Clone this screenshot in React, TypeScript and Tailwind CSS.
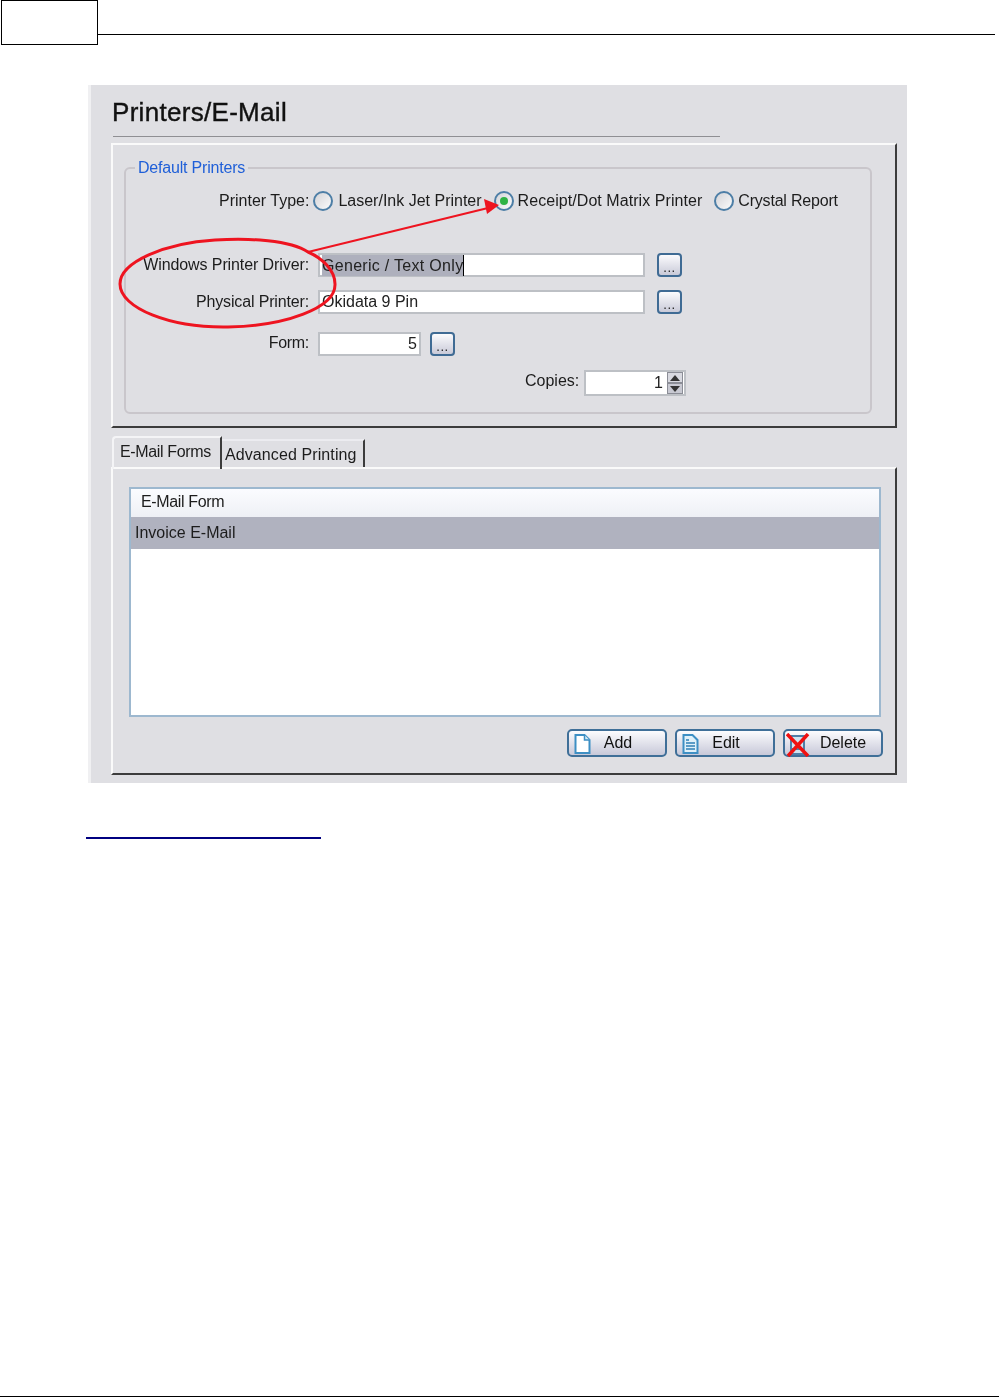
const EllipsisButton = ({ className = '' }: { className?: string }) => (
  <button className={`flex h-[24px] w-[25px] shrink-0 items-end justify-center rounded-[4px] border-2 border-[#3f6b94] bg-gradient-to-b from-[#fbfbfd] to-[#c9cad8] pb-[1px] text-[13px] leading-[12px] tracking-[0.5px] text-[#222] ${className}`}>
    ...
  </button>
)

const Radio = ({ checked = false }: { checked?: boolean }) => (
  <span className="flex h-[20px] w-[20px] shrink-0 items-center justify-center rounded-full border-2 border-[#4d7ea6] bg-gradient-to-br from-[#d4d4d8] to-[#fbfbfb]">
    {checked && <span className="h-[8px] w-[8px] rounded-full bg-[#2fb344]" />}
  </span>
)

const Label = ({ children, className = '' }: { children: string; className?: string }) => (
  <span className={`w-[183px] shrink-0 text-right text-[16px] leading-[20px] text-[#1c1c1c] ${className}`}>{children}</span>
)

const Panel = ({ className = '', children }: { className?: string; children: React.ReactNode }) => (
  <div className={`border-t-2 border-r-2 border-b-2 border-l-2 border-t-[#fafafa] border-r-[#3c3c3c] border-b-[#3c3c3c] border-l-[#fafafa] ${className}`}>
    {children}
  </div>
)

const ToolButton = ({ label, icon, className = '' }: { label: string; icon: React.ReactNode; className?: string }) => (
  <button className={`relative flex h-[28px] w-[100px] items-center justify-center rounded-[5px] border-2 border-[#3f6f98] bg-gradient-to-b from-[#fcfcfe] to-[#c8c9d9] text-[16px] leading-[20px] text-[#111] ${className}`}>
    <span className="absolute top-[3px] left-[4px] h-[20px] w-[20px]">{icon}</span>
    <span className="ml-[2px]">{label}</span>
  </button>
)

const AddIcon = () => (
  <svg viewBox="0 0 20 20" className="h-full w-full">
    <path d="M2.5 1h9l5 5v13h-14z" fill="#fff" stroke="#3d8fc4" strokeWidth="2" />
    <path d="M11.5 1v5h5" fill="#d7ecf7" stroke="#3d8fc4" strokeWidth="1.5" />
  </svg>
)

const EditIcon = () => (
  <svg viewBox="0 0 20 20" className="h-full w-full">
    <path d="M2.5 1h9l5 5v13h-14z" fill="#dff0f9" stroke="#3d8fc4" strokeWidth="2" />
    <path d="M5 6h3M5 9h9M5 12h9M5 15h9" stroke="#2f7fb5" strokeWidth="1.6" />
  </svg>
)

const DeleteIcon = () => (
  <svg viewBox="0 0 24 24" className="h-[24px] w-[24px] -translate-x-[3px] -translate-y-[1px]">
    <path d="M5 3h13v18H5z" fill="#cfe3f0" stroke="#4f7fa8" strokeWidth="2" />
    <path d="M5 16h13" stroke="#4f7fa8" strokeWidth="2" />
    <path d="M1 1l21 22M22 1L2 23" stroke="#f01010" strokeWidth="3.5" />
  </svg>
)

export default function App() {
  return (
    <div className="relative h-[1397px] w-[999px] overflow-hidden bg-white font-['Liberation_Sans',sans-serif]">
      <div className="flex items-start pl-[1px]">
        <div className="h-[45px] w-[97px] border border-black" />
        <div className="mt-[34px] mr-[4px] flex-1 border-t border-black" />
      </div>

      <div className="relative mt-[40px] ml-[88px] h-[698px] w-[819px] border-l-[3px] border-[#f0f0f2] bg-[#dfdfe3] pt-[13px] pl-[20px] blur-[0.35px]">
        <h1 className="pl-[1px] text-[26px] leading-[28px] tracking-[0.3px] text-[#111] [-webkit-text-stroke:0.4px_#111]">Printers/E-Mail</h1>
        <div className="mt-[10px] ml-[2px] h-[1px] w-[607px] bg-[#8f8f93]" />

        <Panel className="mt-[6px] h-[285px] w-[786px] pt-[22px] pl-[11px]">
          <div className="relative h-[247px] w-[748px] rounded-[6px] border-2 border-[#c9c6cb]">
            <span className="absolute -top-[10px] left-[9px] bg-[#dfdfe3] px-[3px] text-[16px] leading-[18px] tracking-[-0.2px] text-[#1f5fd8]">Default Printers</span>

            <div className="mt-[21px] flex h-[22px] items-center text-[16px] leading-[20px] text-[#1c1c1c]">
              <span className="ml-[93px]">Printer Type:</span>
              <span className="ml-[4px] flex items-center gap-[5px]"><Radio />Laser/Ink Jet Printer</span>
              <span className="ml-[12px] flex items-center gap-[4px]"><Radio checked /><span className="tracking-[0.06px]">Receipt/Dot Matrix Printer</span></span>
              <span className="ml-[12px] flex items-center gap-[4px]"><Radio /><span className="tracking-[-0.2px]">Crystal Report</span></span>
            </div>

            <div className="mt-[41px] flex items-center gap-[9px]">
              <Label className="tracking-[-0.1px]">Windows Printer Driver:</Label>
              <div className="flex h-[24px] w-[327px] items-center border-2 border-[#bdc0c5] bg-white pl-[2px] text-[16px] text-[#222]">
                <span className="border-r border-black bg-[#aeb0bd] leading-[21px] tracking-[0.3px]">Generic / Text Only</span>
              </div>
              <EllipsisButton className="ml-[3px]" />
            </div>
            <div className="mt-[13px] flex items-center gap-[9px]">
              <Label className="tracking-[-0.15px]">Physical Printer:</Label>
              <div className="flex h-[24px] w-[327px] items-center border-2 border-[#bdc0c5] bg-white pl-[2px] text-[16px] text-[#222]">Okidata 9 Pin</div>
              <EllipsisButton className="ml-[3px]" />
            </div>
            <div className="mt-[18px] flex items-center gap-[9px]">
              <Label className="pb-[3px] tracking-[-0.3px]">Form:</Label>
              <div className="flex h-[24px] w-[103px] items-center justify-end border-2 border-[#bdc0c5] bg-white pr-[2px] text-[16px] text-[#222]">5</div>
              <EllipsisButton />
            </div>
            <div className="mt-[14px] flex items-center">
              <span className="ml-[399px] w-[53px] pb-[4px] text-[16px] leading-[20px] text-[#1c1c1c]">Copies:</span>
              <div className="ml-[6px] flex h-[26px] w-[102px] items-center justify-end border-2 border-[#bdc0c5] bg-white pr-[1px] text-[16px] text-[#222]">
                <span className="mr-[4px]">1</span>
                <span className="flex h-[22px] w-[16px] flex-col">
                  <span className="flex h-[11px] items-center justify-center border border-[#8b8d96] bg-[#d8d9e0]">
                    <svg viewBox="0 0 10 6" className="h-[6px] w-[10px]"><path d="M5 0l5 6H0z" fill="#333" /></svg>
                  </span>
                  <span className="flex h-[11px] items-center justify-center border border-[#8b8d96] bg-[#c8c9d2]">
                    <svg viewBox="0 0 10 6" className="h-[6px] w-[10px]"><path d="M5 6L0 0h10z" fill="#333" /></svg>
                  </span>
                </span>
              </div>
            </div>
          </div>
        </Panel>

        <div className="mt-[8px] flex h-[31px] items-end pl-[1px] text-[16px] leading-[20px] text-[#1c1c1c]">
          <div className="z-10 -mb-[2px] flex h-[33px] w-[110px] items-start rounded-tl-[4px] border-t-2 border-r-2 border-l-2 border-t-[#f4f4f6] border-r-[#3c3c3c] border-l-[#f4f4f6] pt-[4px] pl-[6px] tracking-[-0.35px]">E-Mail Forms</div>
          <div className="flex h-[28px] w-[143px] items-start border-t-2 border-r-2 border-t-[#ececf0] border-r-[#3c3c3c] pt-[4px] pl-[3px] tracking-[0.1px]">Advanced Printing</div>
        </div>

        <Panel className="h-[308px] w-[786px] pt-[18px] pl-[16px]">
          <div className="h-[230px] w-[752px] border-2 border-[#9db8cf] bg-white text-[16px] leading-[20px] text-[#1c1c1c]">
            <div className="flex h-[28px] items-center bg-gradient-to-b from-[#fbfcff] to-[#eef0f5] pb-[2px] pl-[10px] tracking-[-0.35px]">E-Mail Form</div>
            <div className="flex h-[32px] items-center bg-[#b0b2bf] pl-[4px]">Invoice E-Mail</div>
          </div>
          <div className="mt-[12px] flex w-[754px] justify-end gap-[8px]">
            <ToolButton label="Add" icon={<AddIcon />} />
            <ToolButton label="Edit" icon={<EditIcon />} />
            <ToolButton label="Delete" icon={<DeleteIcon />} className="pl-[18px]" />
          </div>
        </Panel>

        {/* red marker drawn over the screenshot */}
        <svg className="pointer-events-none absolute top-0 left-[-3px]" width="819" height="300" viewBox="88 85 819 300" fill="none">
          <path d="M308 252C290 240 250 238 215 240C165 243 120 262 120 284C120 308 170 328 228 327C285 326 336 308 335 284C335 270 322 258 308 252Z" stroke="#ee1420" strokeWidth="3" />
          <path d="M308 252L488 208" stroke="#ee1420" strokeWidth="2" />
          <path d="M499 205L484 199L487 214Z" fill="#ee1420" />
        </svg>
      </div>

      <a className="mt-[54px] ml-[86px] block h-[2px] w-[235px] bg-[#000080]" href="#" />

      <div className="absolute bottom-0 left-0 h-[1px] w-full bg-black" />
    </div>
  )
}
